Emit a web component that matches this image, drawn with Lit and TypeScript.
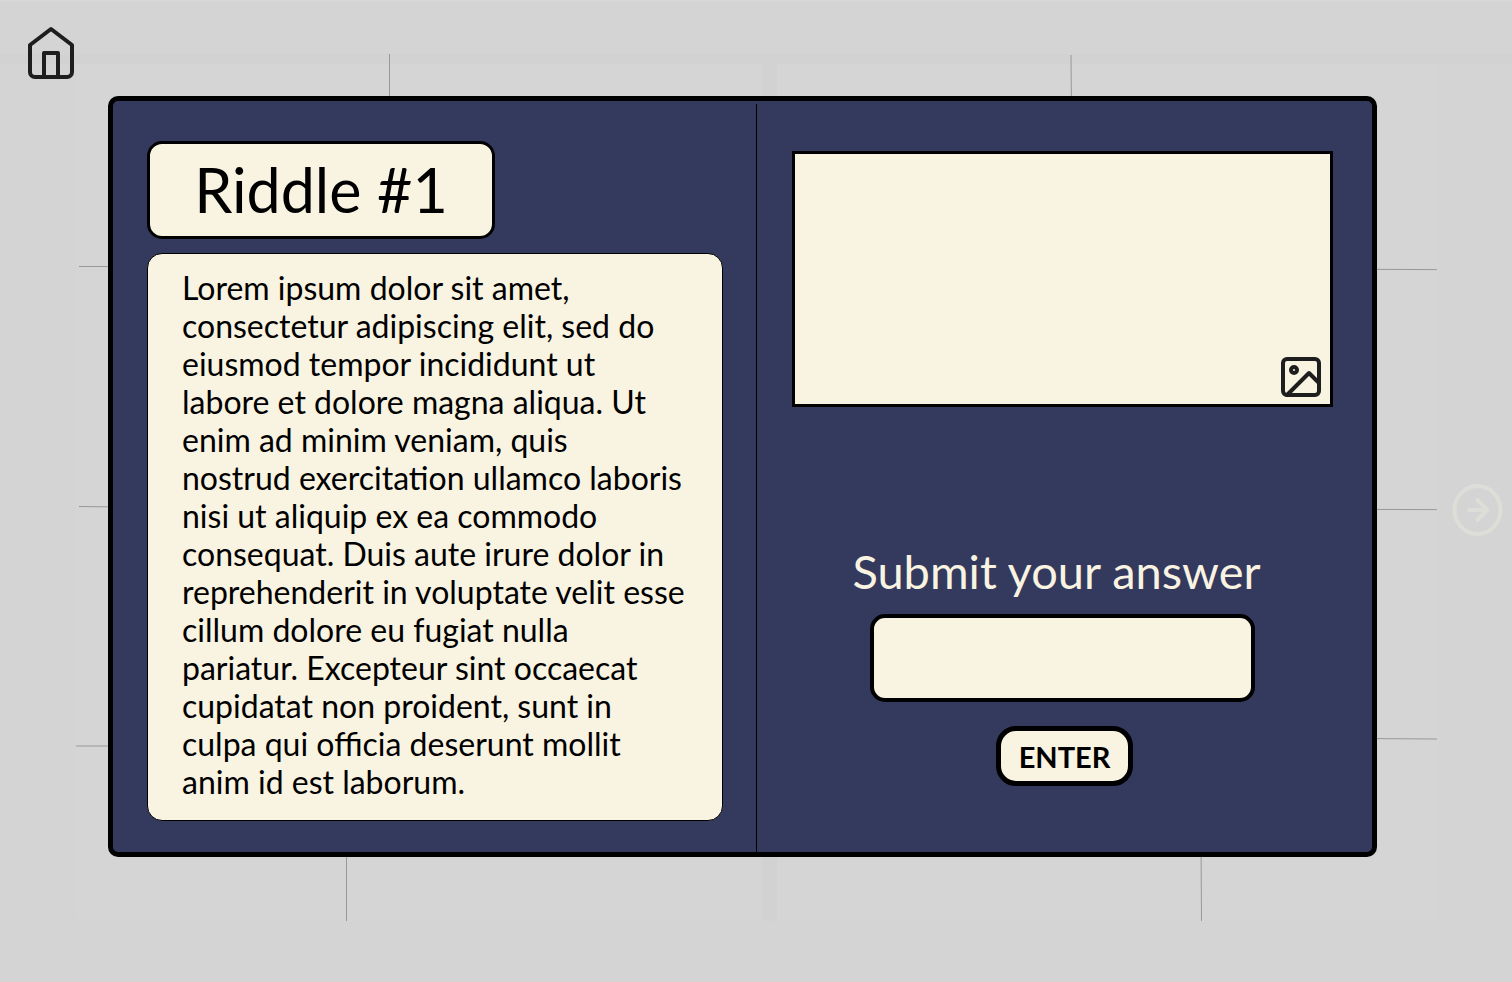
import { LitElement, html, css, svg } from "lit";
import { customElement, state } from "lit/decorators.js";

const RIDDLE_LINES = [
  "Lorem ipsum dolor sit amet,",
  "consectetur adipiscing elit, sed do",
  "eiusmod tempor incididunt ut",
  "labore et dolore magna aliqua. Ut",
  "enim ad minim veniam, quis",
  "nostrud exercitation ullamco laboris",
  "nisi ut aliquip ex ea commodo",
  "consequat. Duis aute irure dolor in",
  "reprehenderit in voluptate velit esse",
  "cillum dolore eu fugiat nulla",
  "pariatur. Excepteur sint occaecat",
  "cupidatat non proident, sunt in",
  "culpa qui officia deserunt mollit",
  "anim id est laborum.",
];

// Seams between the wall panels behind the dialog: x1, y1, x2, y2.
const SEAMS = [
  [389.5, 54, 389.5, 110],
  [1071, 55, 1071.5, 110],
  [79, 266.5, 120, 266.5],
  [79, 506.5, 120, 507],
  [76, 746, 120, 746],
  [346.5, 840, 346.5, 921],
  [1201, 840, 1201.5, 921],
  [1360, 269.3, 1437, 269.6],
  [1360, 509.4, 1437, 509.6],
  [1360, 738.5, 1437, 739],
];

@customElement("room-backdrop")
export class RoomBackdrop extends LitElement {
  static styles = css`
    :host {
      display: block;
    }
    .scene {
      display: block;
      width: 100%;
      height: 100%;
    }
    .page {
      fill: #d5d5d5;
    }
    .shade {
      fill: #d2d2d2;
    }
    .edge {
      fill: #d8d8d8;
    }
    .seam {
      stroke: #999999;
      stroke-width: 1;
    }
  `;

  render() {
    return html`
      <svg class="scene" viewBox="0 0 1512 982" preserveAspectRatio="none" aria-hidden="true">
        <rect class="edge" width="1512" height="2"></rect>
        <rect class="page" x="76" y="55" width="1361" height="866" rx="10"></rect>
        <rect class="shade" y="54" width="1512" height="10"></rect>
        <rect class="shade" x="762" y="55" width="15" height="866"></rect>
        ${SEAMS.map(
          ([x1, y1, x2, y2]) =>
            svg`<line class="seam" x1=${x1} y1=${y1} x2=${x2} y2=${y2}></line>`
        )}
      </svg>
    `;
  }
}

@customElement("app-root")
export class AppRoot extends LitElement {
  static styles = css`
    :host {
      display: block;
      position: relative;
      min-height: 100vh;
      box-sizing: border-box;
      background: #d4d4d4;
      color: #000000;
      font-family: Lato, "Noto Sans", sans-serif;
    }
    * {
      box-sizing: border-box;
    }
    .backdrop {
      position: absolute;
      inset: 0;
      z-index: 0;
    }
    .layout {
      position: relative;
      z-index: 1;
      display: grid;
      grid-template-columns: 108px minmax(0, 1fr) 135px;
      min-height: 100vh;
    }
    .home {
      justify-self: start;
      align-self: start;
      margin: 25px 0 0 26px;
      display: block;
    }
    .icon {
      display: block;
      fill: none;
      stroke: #1e1e1e;
      stroke-width: 4;
      stroke-linecap: round;
      stroke-linejoin: round;
    }
    .next {
      justify-self: end;
      align-self: start;
      margin: 482px 8px 0 0;
      padding: 0;
      border: 0;
      background: none;
      cursor: pointer;
    }
    .next .icon {
      stroke: #deded8;
    }
    .dialog {
      display: grid;
      grid-template-columns: minmax(0, 643fr) 1px minmax(0, 615fr);
      align-self: start;
      margin-top: 96px;
      border: 5px solid #000000;
      border-radius: 10px;
      background: #34395e;
    }
    .divider {
      background: #000000;
      margin-top: 3px;
    }
    .riddle {
      display: flex;
      flex-direction: column;
      align-items: flex-start;
      gap: 14px;
      padding: 40px 33px 31px 34px;
    }
    .title {
      margin: 0;
      width: 348px;
      border: 3px solid #000000;
      border-radius: 15px;
      background: #f9f3e1;
      font-size: 61px;
      line-height: 92px;
      font-weight: 400;
      text-align: center;
    }
    .text {
      margin: 0;
      width: 100%;
      padding: 15px 34px 19px;
      border: 1px solid #000000;
      border-radius: 15px;
      background: #f9f3e1;
      font-size: 32px;
      line-height: 38px;
      white-space: nowrap;
    }
    .answer {
      display: flex;
      flex-direction: column;
      align-items: center;
      padding: 50px 39px 66px 35px;
    }
    .picture {
      display: flex;
      align-items: flex-end;
      justify-content: flex-end;
      width: 100%;
      height: 256px;
      margin: 0;
      padding: 3px 5px;
      border: 3px solid #000000;
      background: #f9f3e1;
    }
    .form {
      display: flex;
      flex-direction: column;
      align-items: center;
      margin-top: auto;
      gap: 24px;
      width: 100%;
    }
    .field {
      display: flex;
      flex-direction: column;
      align-items: center;
      gap: 14px;
      width: 100%;
    }
    .label {
      padding-right: 12px;
      color: #f9f3e1;
      font-size: 47px;
      line-height: 58px;
      white-space: nowrap;
    }
    .input {
      width: 385px;
      max-width: 100%;
      height: 88px;
      padding: 0 20px;
      border: 4px solid #000000;
      border-radius: 15px;
      background: #f9f3e1;
      color: #000000;
      font-family: inherit;
      font-size: 32px;
    }
    .enter {
      width: 137px;
      height: 60px;
      margin-left: 4px;
      padding: 2px 0 0;
      border: 5px solid #000000;
      border-radius: 20px;
      background: #f9f3e1;
      color: #000000;
      font-family: inherit;
      font-size: 29px;
      font-weight: 700;
      line-height: 48px;
      cursor: pointer;
    }
  `;

  @state() private answer = "";

  private onInput(e: Event) {
    this.answer = (e.target as HTMLInputElement).value;
  }

  private onSubmit(e: Event) {
    e.preventDefault();
  }

  render() {
    return html`
      <room-backdrop class="backdrop"></room-backdrop>
      <div class="layout">
        <a class="home" href="#" aria-label="Home">
          <svg class="icon" width="50" height="56" viewBox="0 0 50 56">
            <path d="M4 20 L25 4 L46 20 V47 a5 5 0 0 1 -5 5 H9 a5 5 0 0 1 -5 -5 Z"></path>
            <path d="M18 52 V28 H32 V52"></path>
          </svg>
        </a>
        <main class="dialog">
          <section class="riddle">
            <h1 class="title">Riddle #1</h1>
            <p class="text">
              ${RIDDLE_LINES.map((line, i) => (i ? html`<br />${line}` : line))}
            </p>
          </section>
          <div class="divider"></div>
          <section class="answer">
            <figure class="picture">
              <svg class="icon" width="48" height="48" viewBox="0 0 48 48" aria-hidden="true">
                <rect x="6" y="6" width="36" height="36" rx="4"></rect>
                <circle cx="17" cy="17" r="3"></circle>
                <path d="M42 30 L32 20 L10 42"></path>
              </svg>
            </figure>
            <form class="form" @submit=${this.onSubmit}>
              <div class="field">
                <label class="label" for="answer">Submit your answer</label>
                <input
                  class="input"
                  id="answer"
                  type="text"
                  autocomplete="off"
                  .value=${this.answer}
                  @input=${this.onInput}
                />
              </div>
              <button class="enter" type="submit">ENTER</button>
            </form>
          </section>
        </main>
        <button class="next" type="button" aria-label="Next">
          <svg class="icon" width="54" height="56" viewBox="0 0 54 56">
            <ellipse cx="27.5" cy="28" rx="23" ry="24"></ellipse>
            <path d="M19 28 H37 M27.5 18 L37 28 L27.5 38"></path>
          </svg>
        </button>
      </div>
    `;
  }
}
